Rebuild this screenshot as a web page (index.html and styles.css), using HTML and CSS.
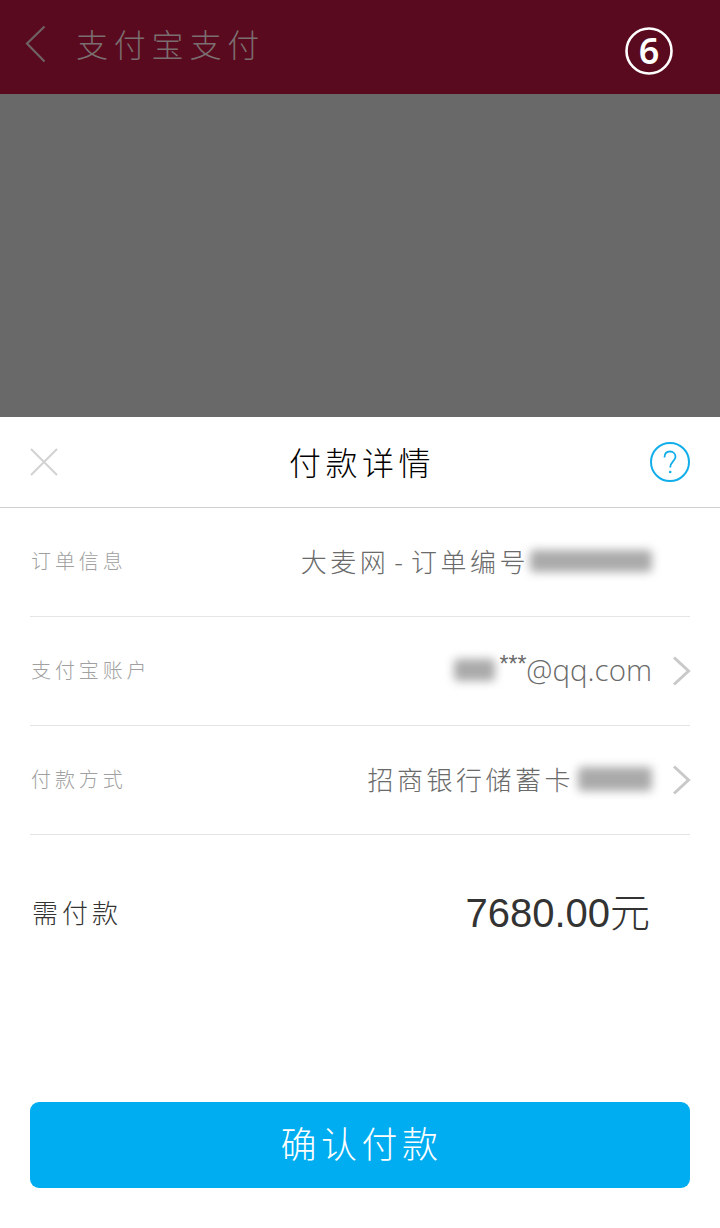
FILE: index.html
```html
<!DOCTYPE html>
<html lang="zh-CN">
<head>
<meta charset="utf-8">
<title>付款详情</title>
<link rel="stylesheet" href="styles.css">
</head>
<body>
<div class="page">
  <header class="topbar">
    <svg class="back" width="24" height="40" viewBox="0 0 24 40"><path d="M20.500 1.500 3 18.500 20.500 36.500" fill="none" stroke="#6e6264" stroke-width="2.200"/></svg>
    <span class="topbar-title">支付宝支付</span>
    <svg class="step" width="48" height="48" viewBox="0 0 48 48"><circle cx="24" cy="24" r="22.500" fill="none" stroke="#fff" stroke-width="2.600"/><text x="24" y="37" text-anchor="middle" class="step-num">6</text></svg>
  </header>
  <div class="dim"></div>
  <section class="sheet">
    <div class="sheet-head">
      <svg class="close" width="28" height="28" viewBox="0 0 28 28"><path d="M1 1 27 27M27 1 1 27" fill="none" stroke="#d2d2d2" stroke-width="2"/></svg>
      <h1 class="sheet-title">付款详情</h1>
      <svg class="help" width="40" height="40" viewBox="0 0 40 40"><circle cx="20" cy="20" r="19" fill="none" stroke="#12aeea" stroke-width="2"/><path d="M14.500 15.500C14.500 11.500 17 9.500 20 9.500C23.300 9.500 25.500 11.800 25.500 14.800C25.500 18.800 20.200 19.800 20.200 25.500" fill="none" stroke="#12aeea" stroke-width="1.800"/><circle cx="20.200" cy="30" r="1.300" fill="#12aeea"/></svg>
    </div>
    <div class="rows">
      <div class="row">
        <span class="label">订单信息</span>
        <span class="value value-pad">大麦网<span class="dash">-</span>订单编号<i class="smudge smudge-order"></i></span>
      </div>
      <div class="row">
        <span class="label">支付宝账户</span>
        <span class="value"><i class="smudge smudge-account"></i><span class="stars">***</span><span class="email">@qq.com</span></span>
        <svg class="chev" width="20" height="30" viewBox="0 0 20 30"><path d="M2 1.500 16.500 15 2 28.500" fill="none" stroke="#c9c9c9" stroke-width="3"/></svg>
      </div>
      <div class="row">
        <span class="label">付款方式</span>
        <span class="value">招商银行储蓄卡<i class="smudge smudge-card"></i></span>
        <svg class="chev" width="20" height="30" viewBox="0 0 20 30"><path d="M2 1.500 16.500 15 2 28.500" fill="none" stroke="#c9c9c9" stroke-width="3"/></svg>
      </div>
    </div>
    <div class="total">
      <span class="total-label">需付款</span>
      <span class="total-value">7680.00<span class="yuan">元</span></span>
    </div>
    <button class="confirm"><span class="confirm-text">确认付款</span></button>
  </section>
</div>
</body>
</html>
```

FILE: styles.css
```css
* { box-sizing: border-box; }
html, body { margin: 0; padding: 0; }
body {
  background: #fff;
  font-family: "Noto Sans CJK SC", "Liberation Sans", sans-serif;
  font-weight: 300;
}
.page {
  width: 720px;
  height: 1228px;
  display: flex;
  flex-direction: column;
  overflow: hidden;
}
.topbar {
  height: 94px;
  background: #5a0a1e;
  display: flex;
  align-items: center;
  padding: 0 47px 0 24px;
}
.back { margin-top: -4px; }
.topbar-title {
  margin-left: 28px;
  margin-top: -8px;
  font-size: 32px;
  letter-spacing: 5.800px;
  color: #7a6e70;
  line-height: 44px;
}
.step { margin-left: auto; margin-top: 7px; }
.step-num {
  font-family: "Noto Sans", sans-serif;
  font-size: 36px;
  font-weight: 600;
  fill: #fff;
}
.dim { height: 323px; background: #696969; }
.sheet {
  flex: 1;
  background: #fff;
  display: flex;
  flex-direction: column;
}
.sheet-head {
  height: 91px;
  border-bottom: 1px solid #cfcfcf;
  display: grid;
  grid-template-columns: 1fr auto 1fr;
  align-items: center;
  padding: 0 30px;
}
.help { justify-self: end; }
.sheet-title {
  margin: -3px 0 0;
  padding-left: 4px;
  font-size: 32px;
  font-weight: 300;
  letter-spacing: 4.500px;
  color: #000;
  line-height: 44px;
}
.rows { padding: 0 30px; }
.row {
  height: 109px;
  border-bottom: 1px solid #e5e5e5;
  display: flex;
  align-items: center;
}
.label {
  margin: -2px 0 0 1px;
  font-size: 20px;
  letter-spacing: 3.900px;
  color: #a0a0a0;
  line-height: 28px;
}
.value {
  margin-left: auto;
  margin-top: -2px;
  display: flex;
  align-items: center;
  font-size: 26px;
  letter-spacing: 3.500px;
  color: #6a6a6a;
  line-height: 34px;
}
.value-pad { margin-right: 38px; }
.dash { padding-left: 5px; letter-spacing: 8px; }
.smudge {
  display: block;
  background: #aaa;
  filter: blur(5px);
  height: 22px;
  border-radius: 4px;
}
.smudge-order { width: 122px; margin-left: 1px; }
.smudge-account { width: 41px; margin-right: 4px; }
.smudge-card { width: 74px; height: 24px; margin-left: 4px; }
.stars {
  font-family: "Liberation Sans", sans-serif;
  font-size: 23px;
  letter-spacing: 0;
  align-self: flex-start;
  line-height: 22px;
}
.email {
  font-family: "Open Sans", "Liberation Sans", sans-serif;
  font-size: 29.500px;
  font-weight: 300;
  letter-spacing: 0;
}
.chev { margin-left: 20px; margin-right: -2px; }
.total {
  height: 158px;
  padding: 0 70px 0 32px;
  display: flex;
  align-items: center;
  justify-content: space-between;
}
.total-label {
  margin-top: -4px;
  font-size: 26px;
  letter-spacing: 4px;
  color: #333;
  line-height: 36px;
}
.total-value {
  font-family: "Liberation Sans", sans-serif;
  font-size: 40px;
  color: #333;
  line-height: 48px;
  display: flex;
  align-items: center;
  margin-top: -2px;
}
.yuan {
  font-family: "Noto Sans CJK SC", sans-serif;
  font-size: 40px;
  margin-top: -6px;
}
.confirm {
  margin: 109px 30px 0;
  height: 86px;
  border: 0;
  border-radius: 9px;
  background: #00adf0;
  color: #fff;
  font-family: "Noto Sans CJK SC", sans-serif;
  font-size: 36px;
  letter-spacing: 4.500px;
  font-weight: 300;
  padding: 0 0 7px 3px;
}
.confirm-text { display: block; }
```
